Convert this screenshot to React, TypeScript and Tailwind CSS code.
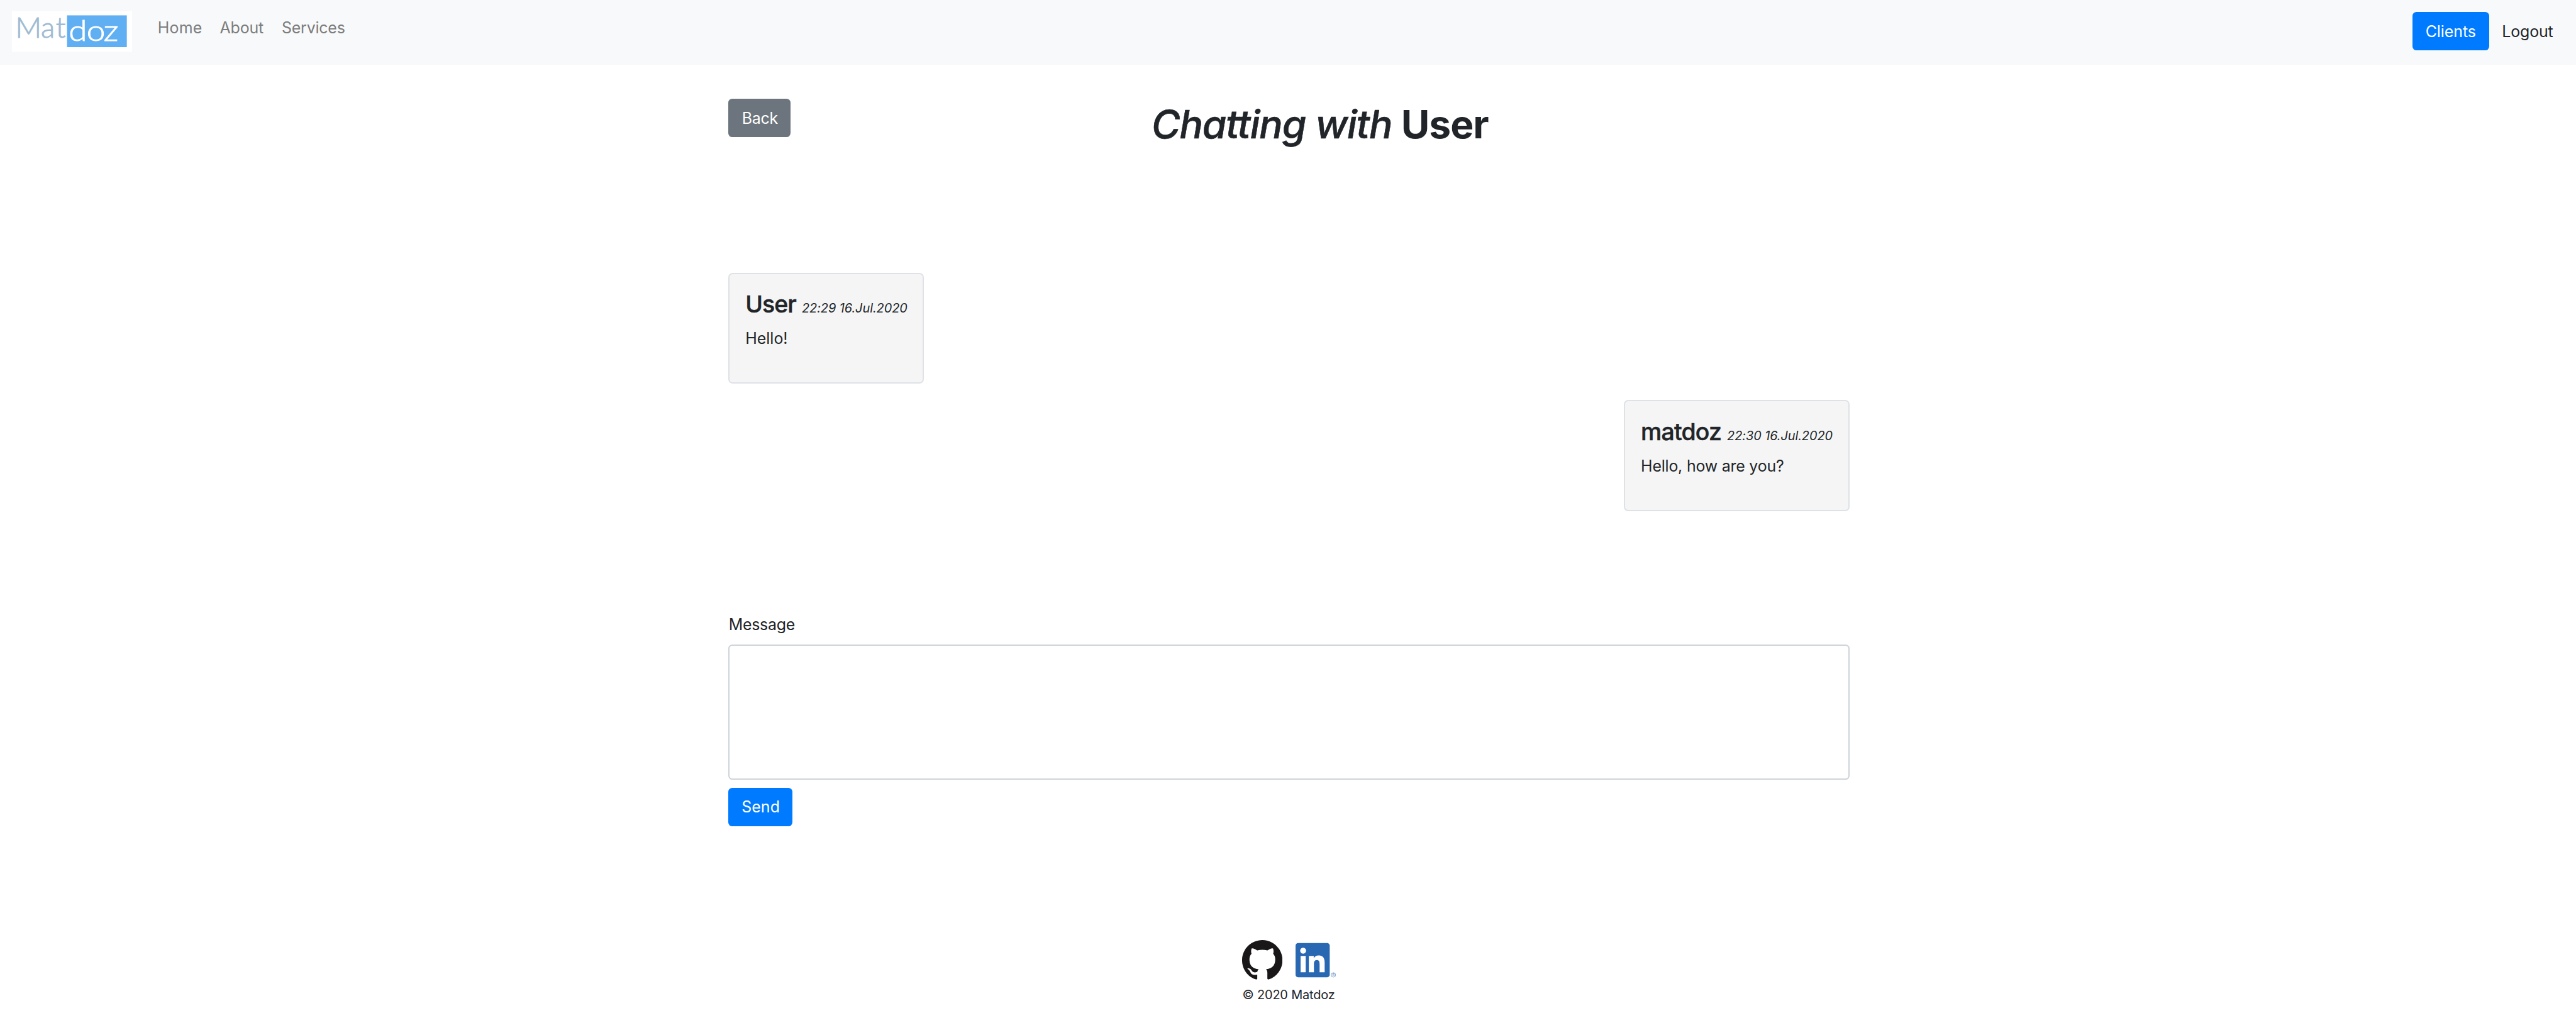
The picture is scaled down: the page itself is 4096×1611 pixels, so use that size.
type Message = {
  author: string;
  time: string;
  text: string;
  authorClass: string;
  timeClass: string;
  textClass: string;
  boxClass: string;
};

const messages: Message[] = [
  {
    author: "User",
    time: "22:29 16.Jul.2020",
    text: "Hello!",
    authorClass: "tracking-[-0.9px]",
    timeClass: "tracking-[-0.056px]",
    textClass: "tracking-[0px]",
    boxClass: "self-start w-[311.4px]",
  },
  {
    author: "matdoz",
    time: "22:30 16.Jul.2020",
    text: "Hello, how are you?",
    authorClass: "tracking-[-0.8px]",
    timeClass: "tracking-[-0.079px]",
    textClass: "tracking-[-0.21px]",
    boxClass: "self-end w-[359.2px]",
  },
];

function Logo() {
  return (
    <svg className="block h-[64.25px] w-[191.1px] overflow-visible" viewBox="0 0 238 80">
      <rect width="238" height="80" fill="#fff" />
      <rect x="109" y="8" width="118.5" height="63" fill="#60aff3" />
      <g fontFamily="Lato, sans-serif" fontWeight="300" fontSize="57" strokeWidth="1.1">
        <text x="7 57.3 86.8" y="51.7" fill="#9fbbd2" stroke="#9fbbd2">
          Mat
        </text>
        <text x="97 127.6 156.4" y="58.3" fill="#fff" stroke="#fff" transform="scale(1.16 1)">
          doz
        </text>
      </g>
    </svg>
  );
}

function GithubMark() {
  return (
    <svg className="block size-[64.25px]" viewBox="0 0 16 16" fill="#191717">
      <path
        fillRule="evenodd"
        d="M8 0C3.58 0 0 3.58 0 8c0 3.54 2.29 6.53 5.47 7.59.4.07.55-.17.55-.38 0-.19-.01-.82-.01-1.49-2.01.37-2.53-.49-2.69-.94-.09-.23-.48-.94-.82-1.13-.28-.15-.68-.52-.01-.53.63-.01 1.08.58 1.23.82.72 1.21 1.87.87 2.33.66.07-.52.28-.87.51-1.07-1.78-.2-3.64-.89-3.64-3.95 0-.87.31-1.59.82-2.15-.08-.2-.36-1.02.08-2.12 0 0 .67-.21 2.2.82.64-.18 1.32-.27 2-.27.68 0 1.36.09 2 .27 1.53-1.04 2.2-.82 2.2-.82.44 1.1.16 1.92.08 2.12.51.56.82 1.27.82 2.15 0 3.07-1.87 3.75-3.65 3.95.29.25.54.73.54 1.48 0 1.07-.01 1.93-.01 2.2 0 .21.15.46.55.38A8.013 8.013 0 0 0 16 8c0-4.42-3.58-8-8-8z"
      />
    </svg>
  );
}

function LinkedinMark() {
  return (
    <svg className="block size-[64.25px]" viewBox="0 0 240 240" fill="#2867b2">
      <path
        transform="translate(0 18) scale(8.458)"
        d="M20.447 20.452h-3.554v-5.569c0-1.328-.027-3.037-1.852-3.037-1.853 0-2.136 1.445-2.136 2.939v5.667H9.351V9h3.414v1.561h.046c.477-.9 1.637-1.85 3.37-1.85 3.601 0 4.267 2.37 4.267 5.455v6.286zM5.337 7.433c-1.144 0-2.063-.926-2.063-2.065 0-1.138.92-2.063 2.063-2.063 1.14 0 2.064.925 2.064 2.063 0 1.139-.925 2.065-2.064 2.065zm1.782 13.019H3.555V9h3.564v11.452zM22.225 0H1.771C.792 0 0 .774 0 1.729v20.542C0 23.227.792 24 1.771 24h20.451C23.2 24 24 23.227 24 22.271V1.729C24 .774 23.2 0 22.222 0h.003z"
      />
      <circle cx="225" cy="207" r="13" fill="none" stroke="#2867b2" strokeWidth="2.2" />
      <text x="225" y="214" fontFamily="Inter, sans-serif" fontSize="19" textAnchor="middle">
        R
      </text>
    </svg>
  );
}

function MessageBox({ message }: { message: Message }) {
  return (
    <article
      className={`${message.boxClass} h-[176.7px] rounded-[7px] border-2 border-[#dee2e6] bg-[#f5f5f5] pt-[25.5px] pl-[25.2px] whitespace-nowrap`}
    >
      <h4 className="flex h-[46.3px] items-baseline gap-[9px] text-[37.4px] leading-[46.3px] font-medium">
        <span className={`${message.authorClass} [-webkit-text-stroke:0.5px_currentColor]`}>{message.author}</span>
        <span className={`${message.timeClass} text-[19.94px] font-normal italic`}>{message.time}</span>
      </h4>
      <p className={`${message.textClass} mt-[12px]`}>{message.text}</p>
    </article>
  );
}

export default function App() {
  return (
    <div className="h-[1611px] w-[4096px] overflow-hidden bg-white font-[Inter,sans-serif] text-[24.93px] leading-[38.55px] text-[#212529]">
      <nav className="flex h-[102.8px] items-start bg-[#f8f9fa] pt-[17.7px] pl-[19.3px]">
        <Logo />
        <div className="ml-[40.4px] flex pt-[7px] text-[#7c7c7d]">
          <a className="w-[98.8px] tracking-[0.2px]">Home</a>
          <a className="w-[98.4px] tracking-[-0.15px]">About</a>
          <a className="tracking-[-0.2px]">Services</a>
        </div>
        <div className="mt-[1.6px] mr-[36.4px] ml-auto flex h-[61px] items-center">
          <button className="h-[61px] w-[122px] rounded-[6.4px] bg-[#007bff] pt-px tracking-[-0.05px] text-white">Clients</button>
          <a className="ml-[20.4px] pt-px tracking-[-0.13px]">Logout</a>
        </div>
      </nav>

      <main className="ml-[1158.1px] flex w-[1783px] flex-col pt-[54.6px]">
        <div className="flex h-[276.3px] items-start">
          <button className="h-[61px] w-[98.8px] rounded-[6.4px] bg-[#6c757d] pl-[1.5px] tracking-[-0.25px] text-white">Back</button>
          <h1 className="ml-[574px] flex pt-[1.4px] text-[62.3px] leading-[77.1px] whitespace-nowrap">
            <em className="font-medium tracking-[-1.14px] [-webkit-text-stroke:0.6px_currentColor]">Chatting with</em>
            <strong className="ml-[14.5px] font-bold tracking-[-1px]">User</strong>
          </h1>
        </div>

        <section className="flex flex-col gap-[25.7px]">
          {messages.map((message) => (
            <MessageBox key={message.author} message={message} />
          ))}
        </section>

        <form className="flex flex-col items-start pt-[161.2px]">
          <label className="pl-[0.6px] tracking-[-0.28px]">Message</label>
          <textarea className="mt-[12.3px] block h-[215px] w-full resize-none rounded-[6.4px] border-2 border-[#ced4da] bg-white" />
          <button type="button" className="mt-[13.1px] h-[61px] w-[102px] rounded-[6.4px] bg-[#007bff] pl-px tracking-[0.05px] text-white">
            Send
          </button>
        </form>
      </main>

      <footer className="pt-[181.6px]">
        <div className="ml-[1974.9px] flex gap-[20.9px]">
          <GithubMark />
          <LinkedinMark />
        </div>
        <p className="mt-[3.2px] ml-[1975.6px] text-[19.94px] tracking-[-0.19px]">© 2020 Matdoz</p>
      </footer>
    </div>
  );
}
